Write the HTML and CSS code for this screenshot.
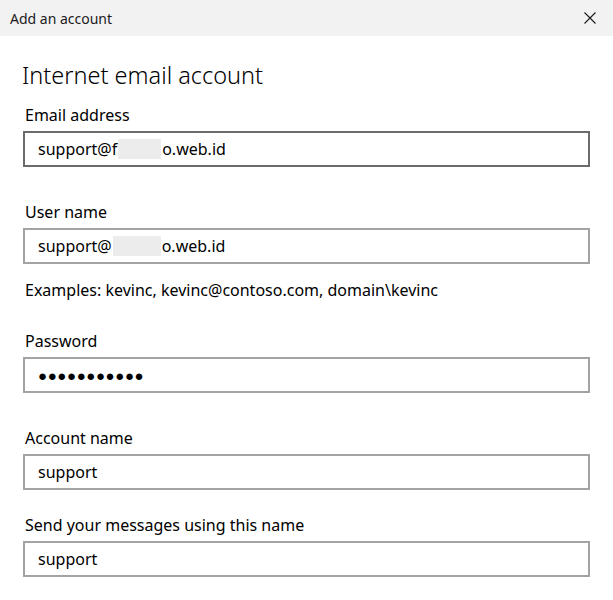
FILE: index.html
```html
<!DOCTYPE html>
<html lang="en">
  <head>
    <meta charset="UTF-8" />
    <meta name="viewport" content="width=device-width, initial-scale=1.0" />
    <title>Add an account</title>
    <link rel="stylesheet" href="styles.css">
  </head>
  <body>
    <header class="titlebar">
      <span class="titlebar-text">Add an account</span>
      <button class="close-btn" aria-label="Close">
        <svg width="12" height="12" viewBox="0 0 12 12">
          <path d="M0.5 0.5 L11.5 11.5 M11.5 0.5 L0.5 11.5" stroke="#1a1a1a" stroke-width="1.1" fill="none" />
        </svg>
      </button>
    </header>

    <main class="content">
      <h1>Internet email account</h1>

      <!-- Email -->
      <div class="field field-email">
        <label>Email address</label>
        <div class="input focused">support@f<span class="blur blur-email"></span>o.web.id</div>
      </div>

      <!-- User name -->
      <div class="field field-user">
        <label>User name</label>
        <div class="input">support@<span class="blur blur-user"></span>o.web.id</div>
        <p class="hint">Examples: kevinc, kevinc@contoso.com, domain\kevinc</p>
      </div>

      <div class="field field-password">
        <label>Password</label>
        <div class="input password">&#9679;&#9679;&#9679;&#9679;&#9679;&#9679;&#9679;&#9679;&#9679;&#9679;&#9679;</div>
      </div>

      <div class="field field-account">
        <label>Account name</label>
        <div class="input">support</div>
      </div>

      <div class="field">
        <label>Send your messages using this name</label>
        <div class="input">support</div>
      </div>
    </main>
  </body>
</html>
```

FILE: styles.css
```css
/* General Styling */
* {
  margin: 0;
  padding: 0;
  box-sizing: border-box;
  font-family: "Noto Sans", "Open Sans", sans-serif;
}

body {
  background-color: #fff;
  color: #000;
}

.titlebar {
  height: 36px;
  background-color: #f2f2f2;
  display: flex;
  align-items: center;
  justify-content: space-between;
  padding: 0 17px 0 10px;
}

.titlebar-text {
  font-size: 14px;
  color: #1a1a1a;
}

.close-btn {
  background: none;
  border: none;
  display: flex;
  cursor: pointer;
}

.content {
  padding: 0 23px;
}

h1 {
  font-size: 23.5px;
  font-weight: 300;
  line-height: 30px;
  margin-top: 24px;
  margin-left: -1px;
  margin-bottom: 15px;
}

.field label {
  display: block;
  font-size: 16px;
  line-height: 20px;
  padding-left: 2px;
  margin-bottom: 6px;
}

.input {
  height: 36px;
  border: 2px solid #a3a3a3;
  padding: 0 13px;
  font-size: 16px;
  display: flex;
  align-items: center;
}

.input.focused {
  border-color: #6b6b6b;
}

.blur {
  display: inline-block;
  height: 20px;
  margin: 0 1px;
  background-color: #ececec;
}

.blur-email {
  width: 43px;
}

.blur-user {
  width: 48px;
}

.password {
  font-size: 15px;
  letter-spacing: 0.6px;
}

.hint {
  font-size: 16px;
  line-height: 20px;
  padding-left: 2px;
  margin-top: 16px;
}

.field-email {
  margin-bottom: 35px;
}

.field-user {
  margin-bottom: 31px;
}

.field-password {
  margin-bottom: 35px;
}

.field-account {
  margin-bottom: 25px;
}
```
